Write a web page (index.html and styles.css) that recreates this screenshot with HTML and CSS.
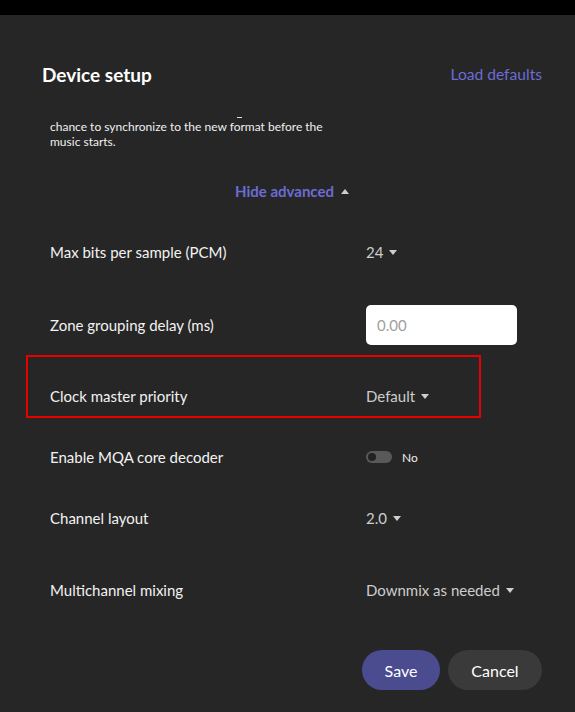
FILE: index.html
```html
<!DOCTYPE html>
<html>
<head>
<meta charset="utf-8">
<link rel="stylesheet" href="styles.css">
</head>
<body>
<div class="topbar"></div>
<div class="dialog">
  <div class="header">
    <h1 class="title">Device setup</h1>
    <span class="link">Load defaults</span>
  </div>
  <div class="scroll">
    <div class="sliver"></div>
    <p class="desc">chance to synchronize to the new format before the<br>music starts.</p>
    <div class="toggle-adv">Hide advanced <span class="up"></span></div>
    <div class="row r1">
      <span class="label">Max bits per sample (PCM)</span>
      <span class="value">24 <span class="caret"></span></span>
    </div>
    <div class="row r2">
      <span class="label">Zone grouping delay (ms)</span>
      <div class="input">0.00</div>
    </div>
    <div class="highlight">
      <div class="row">
        <span class="label">Clock master priority</span>
        <span class="value">Default <span class="caret"></span></span>
      </div>
    </div>
    <div class="row r4">
      <span class="label">Enable MQA core decoder</span>
      <span class="value"><span class="switch"><span class="knob"></span></span><span class="no">No</span></span>
    </div>
    <div class="row r5">
      <span class="label">Channel layout</span>
      <span class="value">2.0 <span class="caret"></span></span>
    </div>
    <div class="row r6">
      <span class="label">Multichannel mixing</span>
      <span class="value">Downmix as needed <span class="caret"></span></span>
    </div>
  </div>
  <div class="footer">
    <button class="btn save">Save</button>
    <button class="btn cancel">Cancel</button>
  </div>
</div>
</body>
</html>
```
FILE: styles.css
```css
* { box-sizing: border-box; }
html, body { margin: 0; padding: 0; }
body {
  background: #262626;
  font-family: Lato, "Open Sans", sans-serif;
  color: #f2f2f2;
  width: 575px;
  height: 712px;
  overflow: hidden;
}
.topbar { height: 15px; background: #000; }
.dialog { padding: 0 33px 0 42px; }
.header {
  display: flex;
  justify-content: space-between;
  align-items: center;
  height: 24px;
  margin-top: 47px;
}
.title { margin: 0; font-size: 19px; font-weight: 700; color: #fff; }
.link { font-size: 15.6px; color: #6c6cd4; }
.scroll { padding-left: 8px; margin-top: 31px; }
.sliver { width: 5px; height: 1px; background: #ddd; margin-left: 187px; margin-bottom: 1px; }
.desc { margin: 0; font-size: 12px; line-height: 15px; color: #f0f0f0; }
.toggle-adv {
  display: flex;
  justify-content: center;
  align-items: center;
  gap: 7px;
  margin-top: 32px;
  margin-left: -8px;
  height: 20px;
  font-size: 15px;
  font-weight: 700;
  color: #6c6cd4;
}
.up {
  width: 0; height: 0;
  border-left: 4px solid transparent;
  border-right: 4px solid transparent;
  border-bottom: 5px solid #cfcfcf;
}
.row {
  display: flex;
  align-items: center;
  height: 24px;
}
.label { width: 316px; font-size: 15px; color: #f2f2f2; }
.value { display: flex; align-items: center; gap: 6px; font-size: 15px; color: #cdcdcd; }
.caret {
  width: 0; height: 0;
  border-left: 4px solid transparent;
  border-right: 4px solid transparent;
  border-top: 5px solid #cfcfcf;
}
.r1 { margin-top: 39px; }
.r2 { margin-top: 49px; }
.input {
  width: 151px;
  height: 40px;
  background: #fff;
  border-radius: 5px;
  font-size: 15px;
  color: #a0a0a0;
  display: flex;
  align-items: center;
  padding-left: 11px;
}
.highlight {
  margin-top: 18px;
  margin-left: -24px;
  width: 455px;
  height: 63px;
  border: 2px solid #e80000;
  padding: 27px 0 0 22px;
}
.r4 { margin-top: 27px; }
.r5 { margin-top: 37px; }
.r6 { margin-top: 48px; }
.switch {
  width: 26px; height: 12px;
  background: #595959;
  border-radius: 6px;
  display: flex; align-items: center;
  padding-left: 2px;
}
.knob { width: 8px; height: 8px; border-radius: 50%; background: #222; }
.no { font-size: 12px; color: #eee; margin-left: 4px; }
.footer {
  display: flex;
  justify-content: flex-end;
  gap: 8px;
  margin-top: 48px;
}
.btn {
  height: 40px;
  border: none;
  border-radius: 20px;
  font-family: Lato, sans-serif;
  font-size: 16px;
  color: #fff;
}
.save { width: 78px; background: #4b4b90; }
.cancel { width: 94px; background: #3a3a3a; }
```
